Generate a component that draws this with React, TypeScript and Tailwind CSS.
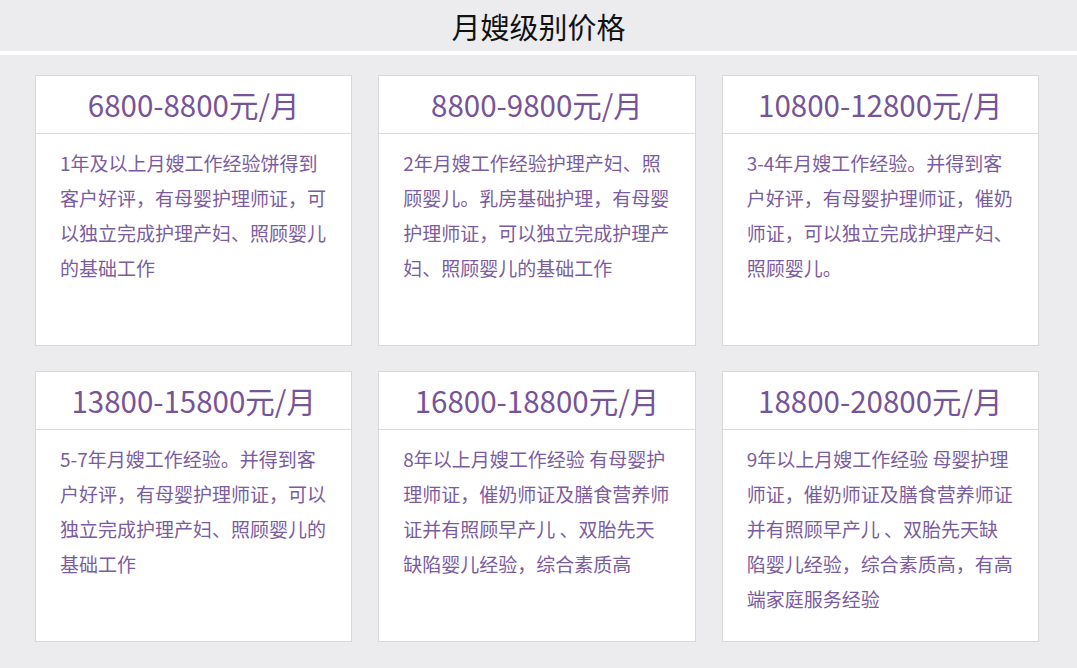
import React from 'react';

const LEVELS = [
  {
    price: '6800-8800元/月',
    lines: ['1年及以上月嫂工作经验饼得到', '客户好评，有母婴护理师证，可', '以独立完成护理产妇、照顾婴儿', '的基础工作'],
  },
  {
    price: '8800-9800元/月',
    lines: ['2年月嫂工作经验护理产妇、照', '顾婴儿。乳房基础护理，有母婴', '护理师证，可以独立完成护理产', '妇、照顾婴儿的基础工作'],
  },
  {
    price: '10800-12800元/月',
    lines: ['3-4年月嫂工作经验。并得到客', '户好评，有母婴护理师证，催奶', '师证，可以独立完成护理产妇、', '照顾婴儿。'],
  },
  {
    price: '13800-15800元/月',
    lines: ['5-7年月嫂工作经验。并得到客', '户好评，有母婴护理师证，可以', '独立完成护理产妇、照顾婴儿的', '基础工作'],
  },
  {
    price: '16800-18800元/月',
    lines: ['8年以上月嫂工作经验 有母婴护', '理师证，催奶师证及膳食营养师', '证并有照顾早产儿 、双胎先天', '缺陷婴儿经验，综合素质高'],
  },
  {
    price: '18800-20800元/月',
    lines: ['9年以上月嫂工作经验 母婴护理', '师证，催奶师证及膳食营养师证', '并有照顾早产儿 、双胎先天缺', '陷婴儿经验，综合素质高，有高', '端家庭服务经验'],
  },
];

const font = { fontFamily: '"Microsoft YaHei", "Noto Sans CJK SC", "Open Sans", sans-serif' };

const PriceCard: React.FC<{ price: string; lines: string[] }> = ({ price, lines }) => (
  <div className="bg-white border border-[#d8d8d8] h-[271px] flex flex-col">
    <div className="h-[58px] shrink-0 border-b border-[#dcdcdc] flex items-center justify-center text-[29.5px] text-[#77539a]">
      {price}
    </div>
    <div className="pl-[24px] pt-[11px] text-[19px] leading-[35px] text-[#7b5c9e]">
      {lines.map((ln) => (
        <div key={ln} className="whitespace-pre">{ln}</div>
      ))}
    </div>
  </div>
);

export default function App() {
  return (
    <div className="w-[1077px] h-[668px] bg-[#ececee] overflow-hidden" style={font}>
      <div className="h-[51px] flex items-center justify-center text-[29px] text-[#111] pt-[2px]">月嫂级别价格</div>
      <div className="h-[4px] bg-white" />
      <div className="grid grid-cols-3 gap-x-[26px] gap-y-[25px] pl-[35px] pr-[38px] pt-[20px]">
        {LEVELS.map((l) => (
          <PriceCard key={l.price} price={l.price} lines={l.lines} />
        ))}
      </div>
    </div>
  );
}
